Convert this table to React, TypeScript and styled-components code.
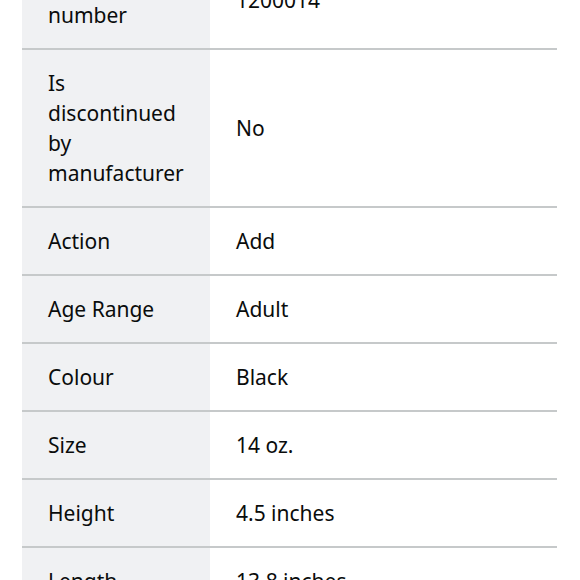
import React from "react";
import styled, { createGlobalStyle } from "styled-components";

type TRow = {
  label: string;
  value: string;
};

const rows: TRow[] = [
  { label: "Item model number", value: "1200014" },
  { label: "Is discontinued by manufacturer", value: "No" },
  { label: "Action", value: "Add" },
  { label: "Age Range", value: "Adult" },
  { label: "Colour", value: "Black" },
  { label: "Size", value: "14 oz." },
  { label: "Height", value: "4.5 inches" },
  { label: "Length", value: "13.8 inches" },
  { label: "Width", value: "6.2 inches" },
];

const GlobalStyle = createGlobalStyle`
  html, body {
    margin: 0;
    padding: 0;
    background: #ffffff;
    overflow: hidden;
  }
  body {
    font-family: "Noto Sans", "Open Sans", Arial, sans-serif;
    color: #0f1111;
  }
`;

export default function App(): React.JSX.Element {
  return (
    <>
      <GlobalStyle />
      <StyledPage>
        <StyledTable>
          <tbody>
            {rows.map((row) => {
              return (
                <StyledRow key={row.label}>
                  <StyledLabel>{row.label}</StyledLabel>
                  <StyledValue>{row.value}</StyledValue>
                </StyledRow>
              );
            })}
          </tbody>
        </StyledTable>
      </StyledPage>
    </>
  );
}

const StyledPage = styled.div`
  padding: 0 23px 0 22px;
  margin-top: -48px;
`;

const StyledTable = styled.table`
  width: 100%;
  border-collapse: collapse;
  table-layout: fixed;
`;

const StyledRow = styled.tr`
  border-bottom: 2px solid #c6c9ca;
`;

const StyledLabel = styled.td`
  width: 136px;
  padding: 18px 26px;
  background: #f0f1f3;
  font-size: 21px;
  line-height: 30px;
  vertical-align: middle;
  color: #0a0c0c;
`;

const StyledValue = styled.td`
  padding: 18px 26px;
  font-size: 21px;
  line-height: 30px;
  vertical-align: middle;
  color: #0a0c0c;
`;
